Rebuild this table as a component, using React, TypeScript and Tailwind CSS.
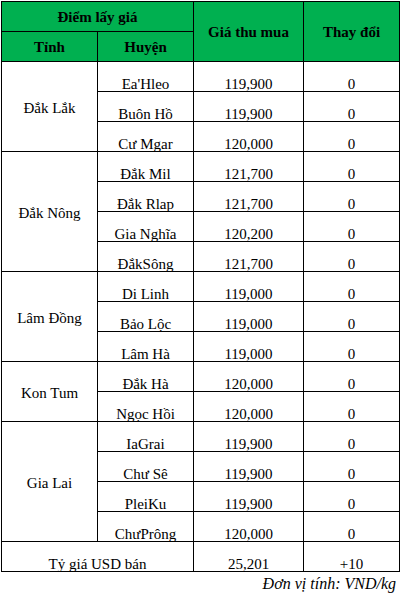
import React from 'react';

type Group = { province: string; rows: { district: string; price: string; change: string }[] };

const groups: Group[] = [
  {
    province: 'Đắk Lắk',
    rows: [
      { district: "Ea'Hleo", price: '119,900', change: '0' },
      { district: 'Buôn Hồ', price: '119,900', change: '0' },
      { district: 'Cư Mgar', price: '120,000', change: '0' },
    ],
  },
  {
    province: 'Đắk Nông',
    rows: [
      { district: 'Đắk Mil', price: '121,700', change: '0' },
      { district: 'Đắk Rlap', price: '121,700', change: '0' },
      { district: 'Gia Nghĩa', price: '120,200', change: '0' },
      { district: 'ĐắkSông', price: '121,700', change: '0' },
    ],
  },
  {
    province: 'Lâm Đồng',
    rows: [
      { district: 'Di Linh', price: '119,000', change: '0' },
      { district: 'Bảo Lộc', price: '119,000', change: '0' },
      { district: 'Lâm Hà', price: '119,000', change: '0' },
    ],
  },
  {
    province: 'Kon Tum',
    rows: [
      { district: 'Đắk Hà', price: '120,000', change: '0' },
      { district: 'Ngọc Hồi', price: '120,000', change: '0' },
    ],
  },
  {
    province: 'Gia Lai',
    rows: [
      { district: 'IaGrai', price: '119,900', change: '0' },
      { district: 'Chư Sê', price: '119,900', change: '0' },
      { district: 'PleiKu', price: '119,900', change: '0' },
      { district: 'ChưPrông', price: '120,000', change: '0' },
    ],
  },
];

const cell = 'border border-black text-center align-bottom h-[30px] p-0 leading-[13px]';
const head = 'border border-black text-center align-middle p-0 pt-[2px] font-bold bg-[#00b050] leading-[17px]';

const App: React.FC = () => {
  return (
    <div className="w-[401px] h-[602px] bg-white text-black text-[15px] [font-family:'Liberation_Serif','Times_New_Roman',serif] pt-[1px] pl-[1px]">
      <table className="table-fixed border-collapse w-[398px]">
        <colgroup>
          <col className="w-[96px]" />
          <col className="w-[96px]" />
          <col className="w-[110px]" />
          <col className="w-[96px]" />
        </colgroup>
        <thead>
          <tr className="h-[30px]">
            <th colSpan={2} className={head}>Điểm lấy giá</th>
            <th rowSpan={2} className={head}>Giá thu mua</th>
            <th rowSpan={2} className={head}>Thay đổi</th>
          </tr>
          <tr className="h-[30px]">
            <th className={head}>Tỉnh</th>
            <th className={head}>Huyện</th>
          </tr>
        </thead>
        <tbody>
          {groups.map((g) =>
            g.rows.map((r, i) => (
              <tr key={g.province + r.district} className="h-[30px]">
                {i === 0 && (
                  <td rowSpan={g.rows.length} className="border border-black text-center align-middle p-0 leading-[17px] pt-[4px]">
                    {g.province}
                  </td>
                )}
                <td className={cell}>{r.district}</td>
                <td className={cell}>{r.price}</td>
                <td className={cell}>{r.change}</td>
              </tr>
            ))
          )}
          <tr className="h-[30px]">
            <td colSpan={2} className={cell}>Tỷ giá USD bán</td>
            <td className={cell}>25,201</td>
            <td className={cell}>+10</td>
          </tr>
        </tbody>
      </table>
      <div className="text-right italic text-[16px] leading-[18px] pr-[5px] pt-[3px]">Đơn vị tính: VND/kg</div>
    </div>
  );
};

export default App;
